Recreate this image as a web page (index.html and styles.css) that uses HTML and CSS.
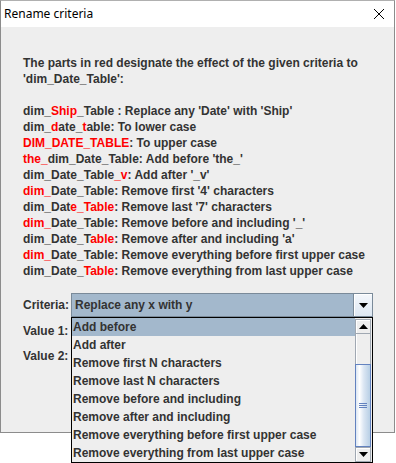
FILE: index.html
```html
<!DOCTYPE html>
<html>
<head>
<meta charset="utf-8">
<link rel="stylesheet" href="styles.css">
</head>
<body>
<div class="window">
  <div class="titlebar">
    <span class="title">Rename criteria</span>
    <svg class="close" width="12" height="12" viewBox="0 0 12 12"><path d="M1 1 L11 11 M11 1 L1 11" stroke="#000" stroke-width="1" fill="none"/></svg>
  </div>
  <div class="content">
    <div class="desc">
      <div class="line">The parts in red designate the effect of the given criteria to</div>
      <div class="line">'dim_Date_Table':</div>
      <div class="line">&nbsp;</div>
      <div class="line">dim_<span class="r">Ship</span>_Table : Replace any 'Date' with 'Ship'</div>
      <div class="line">dim_<span class="r">d</span>ate_<span class="r">t</span>able: To lower case</div>
      <div class="line"><span class="r">DIM_DATE_TABLE</span>: To upper case</div>
      <div class="line"><span class="r">the_</span>dim_Date_Table: Add before 'the_'</div>
      <div class="line">dim_Date_Table<span class="r">_v</span>: Add after '_v'</div>
      <div class="line"><span class="r">dim_</span>Date_Table: Remove first '4' characters</div>
      <div class="line">dim_Dat<span class="r">e_Table</span>: Remove last '7' characters</div>
      <div class="line"><span class="r">dim_</span>Date_Table: Remove before and including '_'</div>
      <div class="line">dim_Date_T<span class="r">able</span>: Remove after and including 'a'</div>
      <div class="line"><span class="r">dim_</span>Date_Table: Remove everything before first upper case</div>
      <div class="line">dim_Date_<span class="r">Table</span>: Remove everything from last upper case</div>
    </div>
    <div class="form">
      <div class="row row-criteria">
        <span class="lbl">Criteria:</span>
        <div class="combo">
          <span class="combo-text">Replace any x with y</span>
          <span class="combo-btn"><svg width="9" height="5" viewBox="0 0 9 5"><path d="M0 0 H9 L4.5 5 Z" fill="#000"/></svg></span>
        </div>
      </div>
      <div class="row row-v1"><span class="lbl">Value 1:</span></div>
      <div class="row row-v2"><span class="lbl">Value 2:</span></div>
    </div>
  </div>
</div>

<div class="popup">
  <div class="list">
    <div class="item sel">Add before</div>
    <div class="item">Add after</div>
    <div class="item">Remove first N characters</div>
    <div class="item">Remove last N characters</div>
    <div class="item">Remove before and including</div>
    <div class="item">Remove after and including</div>
    <div class="item">Remove everything before first upper case</div>
    <div class="item">Remove everything from last upper case</div>
  </div>
  <div class="scrollbar">
    <div class="sb-btn"><svg width="9" height="5" viewBox="0 0 9 5"><path d="M4.5 0 L9 5 H0 Z" fill="#000"/></svg></div>
    <div class="sb-track"></div>
    <div class="sb-thumb"><span class="grip"></span><span class="grip"></span><span class="grip"></span></div>
    <div class="sb-btn"><svg width="9" height="5" viewBox="0 0 9 5"><path d="M0 0 H9 L4.5 5 Z" fill="#000"/></svg></div>
  </div>
</div>
</body>
</html>
```

FILE: styles.css
```css
html, body {
  margin: 0;
  padding: 0;
  background: #ffffff;
}
body {
  width: 396px;
  height: 463px;
  position: relative;
  overflow: hidden;
  font-family: "Liberation Sans", Arial, sans-serif;
}
.window {
  width: 395px;
  height: 433px;
  box-sizing: border-box;
  border: 1px solid #8c8c8c;
  border-top-color: #b0b0b0;
  background: #eeeeee;
  display: flex;
  flex-direction: column;
}
.titlebar {
  height: 26px;
  flex: none;
  background: #ffffff;
  display: flex;
  align-items: center;
  justify-content: space-between;
  padding: 0 8px 0 3px;
}
.title {
  font-family: "Noto Sans", "Open Sans", sans-serif;
  font-size: 12px;
  color: #000;
  position: relative;
  top: -1px;
}
.close {
  display: block;
  margin-right: 1px;
}
.content {
  padding: 28px 0 0 22px;
  font-size: 12px;
  font-weight: bold;
  color: #333333;
}
.line {
  height: 16px;
  line-height: 16px;
  white-space: nowrap;
}
.r {
  color: #ff0000;
}
.form {
  margin-top: 14px;
  display: flex;
  flex-direction: column;
}
.row {
  display: flex;
  align-items: center;
  height: 24px;
}
.row-v1 {
  margin-top: 2px;
}
.row-v2 {
  margin-top: 1px;
}
.lbl {
  width: 48px;
  flex: none;
}
.combo {
  width: 302px;
  height: 24px;
  box-sizing: border-box;
  border: 1px solid #7a8a99;
  background: #a3b8cc;
  display: flex;
  align-items: center;
}
.combo-text {
  flex: 1;
  padding-left: 3px;
}
.combo-btn {
  width: 19px;
  height: 22px;
  box-sizing: border-box;
  border-left: 1px solid #7a8a99;
  background: linear-gradient(#f4f7fb, #dde7f2);
  box-shadow: inset 1px 1px 0 #ffffff;
  display: flex;
  align-items: center;
  justify-content: center;
}
.combo-btn svg {
  display: block;
}
.popup {
  position: absolute;
  left: 71px;
  top: 317px;
  width: 302px;
  height: 146px;
  box-sizing: border-box;
  border: 1px solid #000000;
  background: #eeeeee;
  display: flex;
  font-size: 12px;
  font-weight: bold;
  color: #333333;
}
.list {
  flex: 1;
  display: flex;
  flex-direction: column;
}
.item {
  height: 18px;
  line-height: 18px;
  padding-left: 1px;
  white-space: nowrap;
  overflow: hidden;
}
.item.sel {
  background: #a3b8cc;
}
.scrollbar {
  width: 16px;
  flex: none;
  display: flex;
  flex-direction: column;
  margin-right: 1px;
  margin-top: 1px;
}
.sb-btn {
  height: 15px;
  flex: none;
  box-sizing: border-box;
  border: 1px solid #a0a8b2;
  background: #eeeeee;
  box-shadow: inset 1px 1px 0 #ffffff;
  display: flex;
  align-items: center;
  justify-content: center;
}
.sb-btn svg {
  display: block;
}
.sb-track {
  height: 30px;
  flex: none;
  box-sizing: border-box;
  border-left: 1px solid #a0a8b2;
  border-right: 1px solid #a0a8b2;
  background: #eeeeee;
  box-shadow: inset 1px 0 0 #ffffff;
}
.sb-thumb {
  flex: 1;
  box-sizing: border-box;
  border: 1px solid #6382bf;
  background: linear-gradient(to right, #dce7f4, #ffffff 25%, #dbe6f3 55%, #b8cfe5);
  display: flex;
  flex-direction: column;
  align-items: center;
  justify-content: center;
  gap: 1px;
}
.grip {
  display: block;
  width: 8px;
  height: 1px;
  background: #6382bf;
}
```
